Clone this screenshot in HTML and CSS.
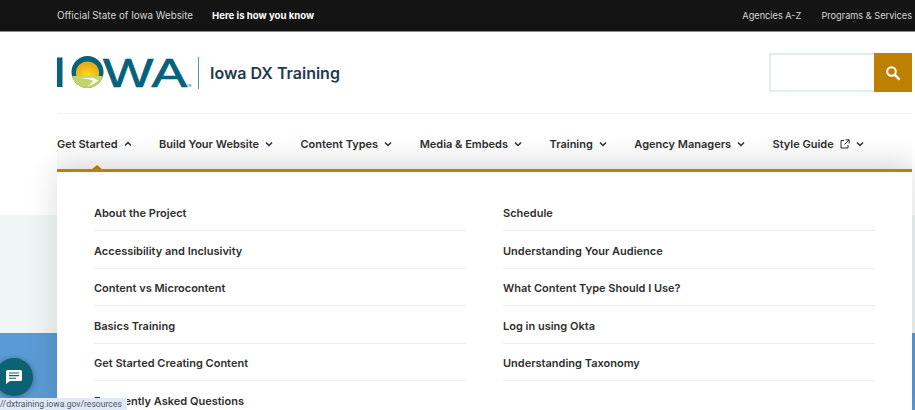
FILE: index.html
```html
<!DOCTYPE html>
<html lang="en">
<head>
    <meta charset="UTF-8">
    <meta name="viewport" content="width=device-width, initial-scale=1.0">
    <title>Iowa DX Training</title>
    <link rel="stylesheet" href="styles.css">
</head>
<body>

<div class="topbar">
    <div class="topbar-left">
        <span>Official State of Iowa Website</span>
        <a href="#" class="know">Here is how you know</a>
    </div>
    <div class="topbar-right">
        <a href="#">Agencies A-Z</a>
        <a href="#">Programs &amp; Services</a>
    </div>
</div>

<header class="site-header">
    <a href="#" class="logo">
        <svg class="logo-mark" width="136" height="36" viewBox="0 0 136 36">
            <defs>
                <clipPath id="disc"><circle cx="30.5" cy="17" r="16"/></clipPath>
                <radialGradient id="sun" cx="50%" cy="70%" r="60%">
                    <stop offset="0" stop-color="#fbe60c"/>
                    <stop offset="1" stop-color="#eda91f"/>
                </radialGradient>
            </defs>
            <rect x="0" y="2.5" width="5.5" height="29.5" fill="#04627a"/>
            <g clip-path="url(#disc)">
                <rect x="14" y="0" width="34" height="34" fill="#04627a"/>
                <circle cx="30.5" cy="18" r="11.6" fill="url(#sun)"/>
                <rect x="14" y="21" width="34" height="14" fill="#c4d468"/>
                <path d="M24 23 L36 22.8 L41.5 25.4 L31 32 L36.5 25.8 L33 24.6 Z" fill="#fff"/>
            </g>
            <text class="logo-text" x="46" y="32" textLength="84" lengthAdjust="spacingAndGlyphs">WA</text>
            <text class="logo-tm" x="130" y="32">TM</text>
        </svg>
        <span class="logo-divider"></span>
        <span class="site-name">Iowa DX Training</span>
    </a>
    <form class="search">
        <input type="text" class="search-input" aria-label="Search">
        <button type="button" class="search-btn" aria-label="Search">
            <svg width="16" height="16" viewBox="0 0 16 16" fill="none" stroke="#fff">
                <circle cx="6.5" cy="6.5" r="4.3" stroke-width="2"/>
                <path d="M9.8 9.8 L14.6 14.6" stroke-width="2.4"/>
            </svg>
        </button>
    </form>
</header>

<nav class="main-nav">
    <a href="#" class="nav-item open">Get Started <svg class="chev" width="8" height="6" viewBox="0 0 8 6"><path d="M1 4.5 L4 1.5 L7 4.5"/></svg></a>
    <a href="#" class="nav-item">Build Your Website <svg class="chev" width="8" height="6" viewBox="0 0 8 6"><path d="M1 1.5 L4 4.5 L7 1.5"/></svg></a>
    <a href="#" class="nav-item">Content Types <svg class="chev" width="8" height="6" viewBox="0 0 8 6"><path d="M1 1.5 L4 4.5 L7 1.5"/></svg></a>
    <a href="#" class="nav-item">Media &amp; Embeds <svg class="chev" width="8" height="6" viewBox="0 0 8 6"><path d="M1 1.5 L4 4.5 L7 1.5"/></svg></a>
    <a href="#" class="nav-item">Training <svg class="chev" width="8" height="6" viewBox="0 0 8 6"><path d="M1 1.5 L4 4.5 L7 1.5"/></svg></a>
    <a href="#" class="nav-item">Agency Managers <svg class="chev" width="8" height="6" viewBox="0 0 8 6"><path d="M1 1.5 L4 4.5 L7 1.5"/></svg></a>
    <a href="#" class="nav-item">Style Guide
        <svg class="ext" width="10" height="10" viewBox="0 0 10 10"><path d="M4 1.5 H1 V9 H8 V6 M5.5 .8 H9.2 V4.5 M9 1 L4.5 5.5"/></svg>
        <svg class="chev" width="8" height="6" viewBox="0 0 8 6"><path d="M1 1.5 L4 4.5 L7 1.5"/></svg>
    </a>
</nav>

<main class="page-body">
    <div class="pale-band"></div>
    <div class="blue-band"></div>
</main>

<div class="dropdown">
    <ul class="dropdown-list">
        <li><a href="#">About the Project</a></li>
        <li><a href="#">Schedule</a></li>
        <li><a href="#">Accessibility and Inclusivity</a></li>
        <li><a href="#">Understanding Your Audience</a></li>
        <li><a href="#">Content vs Microcontent</a></li>
        <li><a href="#">What Content Type Should I Use?</a></li>
        <li><a href="#">Basics Training</a></li>
        <li><a href="#">Log in using Okta</a></li>
        <li><a href="#">Get Started Creating Content</a></li>
        <li><a href="#">Understanding Taxonomy</a></li>
        <li><a href="#">Frequently Asked Questions</a></li>
    </ul>
</div>

<button type="button" class="chat-btn" aria-label="Chat">
    <svg width="16" height="14" viewBox="0 0 16 14">
        <path d="M1.5 0 H14.5 Q16 0 16 1.5 V9.5 Q16 11 14.5 11 H4 L0 14 V1.5 Q0 0 1.5 0 Z" fill="#fff"/>
        <path d="M3 3 H13 M3 5.6 H13 M3 8.2 H10" stroke="#0b6272" stroke-width="1.1"/>
    </svg>
</button>

<div class="status-tip">//dxtraining.iowa.gov/resources</div>

</body>
</html>
```

FILE: styles.css
```css
html, body {
    height: 410px;
    overflow: hidden;
}
body {
    margin: 0;
    position: relative;
    background: #fff;
    font-family: Inter, "Open Sans", sans-serif;
    color: #2b2b2b;
}
a {
    color: inherit;
    text-decoration: none;
}

/* top black strip */
.topbar {
    display: flex;
    justify-content: space-between;
    align-items: center;
    height: 31px;
    padding: 0 3px 0 57px;
    background: #141414;
    border-bottom: 1px solid #8a8a8a;
    font-size: 9.8px;
    color: #d6d6d6;
}
.topbar-left {
    display: flex;
    gap: 19px;
}
.know {
    color: #fff;
    font-weight: 700;
    font-size: 9.6px;
}
.topbar-right {
    display: flex;
    gap: 20px;
    font-size: 9.2px;
}

/* logo + search */
.site-header {
    display: flex;
    justify-content: space-between;
    align-items: center;
    height: 81px;
    margin: 0 3px 0 57px;
    border-bottom: 1px solid #eef3f3;
}
.logo {
    display: flex;
    align-items: center;
}
.logo-mark {
    display: block;
}
.logo-text {
    font-family: "Liberation Sans", sans-serif;
    font-size: 41px;
    fill: #04627a;
    stroke: #04627a;
    stroke-width: 0.7;
}
.logo-tm {
    font-family: "Liberation Sans", sans-serif;
    font-size: 3px;
    fill: #04627a;
}
.logo-divider {
    width: 1px;
    height: 32px;
    margin: 0 11px 0 5px;
    background: #5d98a8;
}
.site-name {
    font-size: 16px;
    font-weight: 600;
    color: #1f3a4d;
}
.search {
    display: flex;
    height: 39px;
}
.search-input {
    width: 103px;
    padding: 0;
    border: 2px solid #e3edf0;
    border-right: 0;
    outline: none;
    background: #fff;
}
.search-btn {
    display: flex;
    justify-content: center;
    align-items: center;
    width: 38px;
    padding: 0;
    border: 0;
    background: #bd8000;
}

/* main nav */
.main-nav {
    display: flex;
    align-items: center;
    gap: 27.5px;
    height: 56px;
    margin: 0 3px 0 57px;
    padding-top: 3px;
    box-sizing: border-box;
    background: linear-gradient(to bottom, #fff 40%, #f6f6f6);
    font-size: 11px;
    font-weight: 600;
    color: #2f2f2f;
}
.nav-item {
    display: flex;
    align-items: center;
    gap: 6px;
    white-space: nowrap;
}
.open {
    position: relative;
}
.open::after {
    content: "";
    position: absolute;
    left: 34px;
    top: 28px;
    border-left: 6px solid transparent;
    border-right: 6px solid transparent;
    border-bottom: 5px solid #bd8000;
}
.chev {
    fill: none;
    stroke: #2f2f2f;
    stroke-width: 1.5;
}
.ext {
    fill: none;
    stroke: #2f2f2f;
    stroke-width: 1;
}

/* what is behind the menu */
.page-body {
    height: 240px;
}
.pale-band {
    height: 118px;
    margin-top: 45px;
    background: #f0f6f6;
}
.blue-band {
    height: 77px;
    background: #5b9bd5;
}

/* open dropdown */
.dropdown {
    position: absolute;
    top: 169px;
    left: 57px;
    right: 3px;
    bottom: 0;
    overflow: hidden;
    padding: 21.5px 37px 0;
    box-sizing: border-box;
    background: #fff;
    border-top: 3px solid #bd8000;
    box-shadow: 0 0 30px rgba(0, 0, 0, 0.15);
}
.dropdown-list {
    display: grid;
    grid-template-columns: 372px 372px;
    column-gap: 37px;
    margin: 0;
    padding: 0;
    list-style: none;
}
.dropdown-list li {
    height: 37.5px;
    box-sizing: border-box;
    padding-top: 12.5px;
    border-bottom: 1px solid #e9eeee;
    font-size: 11px;
    line-height: 14px;
    font-weight: 600;
    color: #2f2f2f;
}

/* overlays */
.chat-btn {
    position: absolute;
    left: -5px;
    top: 358px;
    display: flex;
    justify-content: center;
    align-items: center;
    width: 38px;
    height: 38px;
    padding: 0;
    border: 0;
    border-radius: 50%;
    background: #0b6272;
    box-shadow: 0 1px 6px rgba(0, 0, 0, 0.35);
}
.status-tip {
    position: absolute;
    left: 0;
    bottom: 0;
    height: 12px;
    padding: 0 5px 0 0;
    background: #dfe9f8;
    font-family: Roboto, sans-serif;
    font-size: 8.6px;
    line-height: 12px;
    color: #555;
}
```
